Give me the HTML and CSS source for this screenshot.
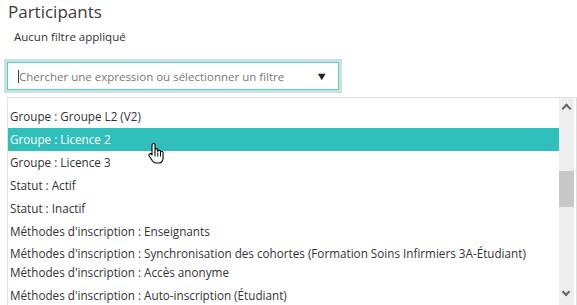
FILE: index.html
```html
<!DOCTYPE html>
<html lang="fr">
<head>
    <meta charset="UTF-8">
    <title>Participants</title>
    <link rel="stylesheet" href="styles.css">
</head>
<body>
    <h2 class="title">Participants</h2>
    <p class="filters">Aucun filtre appliqué</p>

    <div class="search">
        <div class="search-box">
            <span class="caret"></span>
            <span class="placeholder">Chercher une expression ou sélectionner un filtre</span>
            <span class="arrow">&#9660;</span>
        </div>
    </div>

    <div class="options">
        <ul class="option-list">
            <li>Groupe : Groupe L2 (V2)</li>
            <li class="active">Groupe : Licence 2</li>
            <li>Groupe : Licence 3</li>
            <li>Statut : Actif</li>
            <li>Statut : Inactif</li>
            <li>Méthodes d'inscription : Enseignants</li>
            <li class="tight">Méthodes d'inscription : Synchronisation des cohortes (Formation Soins Infirmiers 3A-Étudiant)</li>
            <li>Méthodes d'inscription : Accès anonyme</li>
            <li>Méthodes d'inscription : Auto-inscription (Étudiant)</li>
        </ul>
        <div class="scrollbar">
            <span class="scroll-up"></span>
            <span class="thumb"></span>
            <span class="scroll-down"></span>
        </div>
        <svg class="hand" width="20" height="24" viewBox="0 0 20 24">
            <path d="M6.5 1.5c1 0 1.5.7 1.5 1.5v7.5V8c0-.8.6-1.4 1.4-1.4s1.4.6 1.4 1.4v1.5c0-.8.6-1.3 1.4-1.3s1.3.6 1.3 1.3v1c0-.7.6-1.2 1.3-1.2s1.3.6 1.3 1.3v5.2c0 2.5-1.6 5.2-4 5.2H9c-1.5 0-2.6-.8-3.5-2L2.2 14c-.6-.8-.3-1.7.3-2.1.7-.4 1.5-.2 2 .4L5 13V3c0-.8.6-1.5 1.5-1.5z" fill="#fff" stroke="#000" stroke-width="1.1" stroke-linejoin="round"/>
            <path d="M8 10.5v4M10.8 10.5v4M13.5 11v3.5" stroke="#000" stroke-width="1"/>
        </svg>
    </div>
</body>
</html>
```

FILE: styles.css
```css
body {
    margin: 0;
    font-family: "Open Sans", sans-serif;
    color: #333;
    background-color: #fff;
}

.title {
    margin: 0;
    padding: 0 0 0 8px;
    font-size: 17px;
    font-weight: normal;
    color: #3a3a3a;
    line-height: 24px;
}

.filters {
    margin: 6px 0 0 14px;
    font-size: 11.5px;
    line-height: 14px;
}

.search {
    margin: 15px 0 0 4px;
    width: 332px;
    padding: 3px;
    background-color: #c6e3e0;
}

.search-box {
    display: flex;
    align-items: center;
    height: 26px;
    border: 1px solid #5ccfc6;
    background-color: #fff;
    padding: 0 10px 0 10px;
}

.caret {
    width: 1px;
    height: 13px;
    background-color: #444;
}

.placeholder {
    flex: 1;
    font-size: 11.5px;
    color: #777;
}

.arrow {
    font-size: 13px;
    color: #222;
    transform: scaleY(0.85);
}

.options {
    position: relative;
    margin: 4px 0 0 7px;
    height: 220px;
    border: 1px solid #e2e2e6;
    border-right-color: #ddd;
    display: flex;
    overflow: hidden;
}

.option-list {
    flex: 1;
    list-style: none;
    margin: 0;
    padding: 7px 0 0 0;
}

    .option-list li {
        height: 23px;
        line-height: 23px;
        padding-left: 2px;
        font-size: 11.7px;
        white-space: nowrap;
    }

        .option-list li.active {
            background-color: #30bfba;
            color: #fff;
        }

        .option-list li.tight {
            height: 18px;
            line-height: 21px;
        }

.scrollbar {
    position: relative;
    width: 15px;
    margin-right: 2px;
    background-color: #eee;
}

.scroll-up, .scroll-down {
    position: absolute;
    left: 4px;
    width: 5px;
    height: 5px;
    border-left: 2px solid #666;
    border-top: 2px solid #666;
}

.scroll-up {
    top: 7px;
    transform: rotate(45deg);
}

.scroll-down {
    top: 191px;
    transform: rotate(225deg);
    width: 4px;
    height: 4px;
}

.thumb {
    position: absolute;
    left: 0;
    top: 73px;
    width: 15px;
    height: 36px;
    background-color: #c8c8c8;
}

.hand {
    position: absolute;
    left: 139px;
    top: 44px;
}
```
